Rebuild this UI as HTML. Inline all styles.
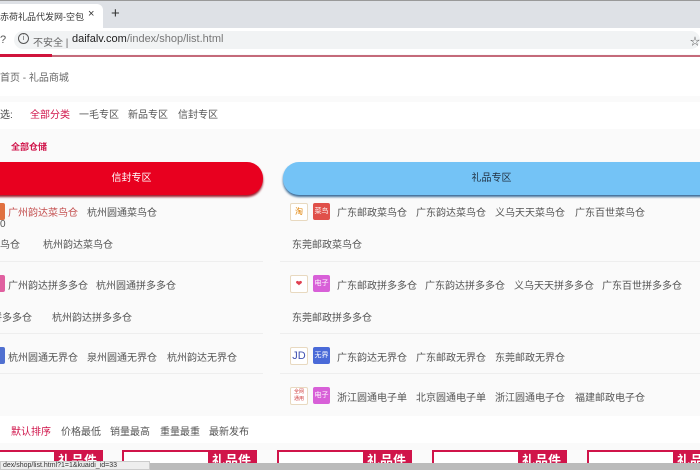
<!DOCTYPE html>
<html><head><meta charset="utf-8"><style>
*{margin:0;padding:0;box-sizing:border-box}
body{width:700px;height:470px;overflow:hidden;background:#fafafa;font-family:"Liberation Sans","Noto Sans CJK SC",sans-serif;font-size:10px;color:#555;position:relative}
.a{position:absolute;white-space:nowrap}
.ic{position:absolute;width:17px;height:17px;border-radius:2px;font-size:7px;color:#fff;text-align:center;line-height:17px}
.ib{position:absolute;width:18px;height:18px;border:1px solid #e8d9c0;background:#fff;border-radius:2px;font-size:8px;text-align:center;line-height:16px}
.card{position:absolute;top:450px;height:20px;border:2px solid #d0144a;border-bottom:none;background:#fff}
.card span{position:absolute;right:0;top:0;background:#d0144a;color:#fff;font-size:13px;font-weight:bold;padding:0 4px;height:18px;line-height:18px}
</style></head><body>
<div class="a" style="left:0;top:0;width:700px;height:28px;background:#dee1e6;border-top:1px solid #999"></div>
<div class="a" style="left:0;top:4px;width:103px;height:24px;background:#fff;border-radius:0 6px 0 0;overflow:hidden"></div>
<div class="a" style="left:0;top:10px;width:84px;overflow:hidden;font-size:9px;color:#333">赤荷礼品代发网-空包快递</div>
<div class="a" style="left:88px;top:8px;font-size:11px;color:#333">×</div>
<div class="a" style="left:111px;top:5px;font-size:15px;color:#333">+</div>
<div class="a" style="left:0;top:28px;width:700px;height:26px;background:#fff"></div>
<div class="a" style="left:14px;top:31px;width:686px;height:18px;background:#f1f3f4;border-radius:9px"></div>
<div class="a" style="left:0;top:34px;font-size:11px;color:#555">?</div>
<div class="a" style="left:18px;top:33px;width:11px;height:11px;border:1px solid #555;border-radius:50%;font-size:7px;text-align:center;line-height:9px;color:#555">i</div>
<div class="a" style="left:33px;top:34px;font-size:10px;color:#666">不安全 |</div>
<div class="a" style="left:72px;top:33px;font-size:11px;color:#222">daifalv.com<span style="color:#777">/index/shop/list.html</span></div>
<div class="a" style="left:690px;top:33px;font-size:10px;color:#555">☆</div>
<div class="a" style="left:0;top:55px;width:700px;height:2px;background:#c46a7a"></div>
<div class="a" style="left:0;top:54px;width:52px;height:3px;background:#d0143c"></div>
<div class="a" style="left:0;top:57px;width:700px;height:39px;background:#fff"></div>
<div class="a" style="left:0;top:69px;color:#666">首页 - 礼品商城</div>
<div class="a" style="left:0;top:102px;width:700px;height:27px;background:#fff"></div>
<div class="a" style="left:0;top:106px;color:#444">选:</div>
<div class="a" style="left:30px;top:106px;color:#d0144a">全部分类</div>
<div class="a" style="left:79px;top:106px">一毛专区</div>
<div class="a" style="left:128px;top:106px">新品专区</div>
<div class="a" style="left:178px;top:106px">信封专区</div>
<div class="a" style="left:11px;top:140px;color:#d0144a;font-size:9px;font-weight:bold">全部仓储</div>
<div class="a" style="left:-20px;top:162px;width:283px;height:33px;background:#e8001f;border-radius:16px;box-shadow:0 2px 2px #9a1a2a;color:#fff;text-align:center;line-height:33px;padding-left:20px">信封专区</div>
<div class="a" style="left:283px;top:162px;width:440px;height:33px;background:#74c3f6;border-radius:16px;box-shadow:0 2px 2px #3a6a96;color:#234;text-align:center;line-height:33px;padding-right:23px">礼品专区</div>
<div class="a" style="left:0;top:261px;width:263px;height:1px;background:#eee"></div>
<div class="a" style="left:0;top:333px;width:263px;height:1px;background:#eee"></div>
<div class="a" style="left:0;top:373px;width:263px;height:1px;background:#eee"></div>
<div class="a" style="left:280px;top:261px;width:420px;height:1px;background:#eee"></div>
<div class="a" style="left:280px;top:333px;width:420px;height:1px;background:#eee"></div>
<div class="a" style="left:280px;top:373px;width:420px;height:1px;background:#eee"></div>
<div class="ic" style="left:-12px;top:203px;background:#e07040"></div>
<div class="a" style="left:8px;top:204px;color:#c45050">广州韵达菜鸟仓</div>
<div class="a" style="left:87px;top:204px">杭州圆通菜鸟仓</div>
<div class="a" style="left:0;top:219px">0</div>
<div class="a" style="left:-10px;top:236px">菜鸟仓</div>
<div class="a" style="left:43px;top:236px">杭州韵达菜鸟仓</div>
<div class="ic" style="left:-12px;top:275px;background:#e060a0"></div>
<div class="a" style="left:8px;top:277px">广州韵达拼多多仓</div>
<div class="a" style="left:96px;top:277px">杭州圆通拼多多仓</div>
<div class="a" style="left:-8px;top:309px">拼多多仓</div>
<div class="a" style="left:52px;top:309px">杭州韵达拼多多仓</div>
<div class="ic" style="left:-12px;top:347px;background:#5070d0"></div>
<div class="a" style="left:8px;top:349px">杭州圆通无界仓</div>
<div class="a" style="left:87px;top:349px">泉州圆通无界仓</div>
<div class="a" style="left:167px;top:349px">杭州韵达无界仓</div>
<div class="ib" style="left:290px;top:203px;color:#e08000">淘</div>
<div class="ic" style="left:313px;top:203px;background:#e0504a">菜鸟</div>
<div class="a" style="left:337px;top:204px">广东邮政菜鸟仓</div>
<div class="a" style="left:416px;top:204px">广东韵达菜鸟仓</div>
<div class="a" style="left:495px;top:204px">义乌天天菜鸟仓</div>
<div class="a" style="left:575px;top:204px">广东百世菜鸟仓</div>
<div class="a" style="left:292px;top:236px">东莞邮政菜鸟仓</div>
<div class="ib" style="left:290px;top:275px;color:#e04050">❤</div>
<div class="ic" style="left:313px;top:275px;background:#d860d8">电子</div>
<div class="a" style="left:337px;top:277px">广东邮政拼多多仓</div>
<div class="a" style="left:425px;top:277px">广东韵达拼多多仓</div>
<div class="a" style="left:514px;top:277px">义乌天天拼多多仓</div>
<div class="a" style="left:602px;top:277px">广东百世拼多多仓</div>
<div class="a" style="left:292px;top:309px">东莞邮政拼多多仓</div>
<div class="ib" style="left:290px;top:347px;color:#4050b0;font-size:11px">JD</div>
<div class="ic" style="left:313px;top:347px;background:#4a6ad8">无界</div>
<div class="a" style="left:337px;top:349px">广东韵达无界仓</div>
<div class="a" style="left:416px;top:349px">广东邮政无界仓</div>
<div class="a" style="left:495px;top:349px">东莞邮政无界仓</div>
<div class="ib" style="left:290px;top:387px;color:#d04040;font-size:5px;line-height:7px;padding-top:1px">全网<br>通用</div>
<div class="ic" style="left:313px;top:387px;background:#d860d8">电子</div>
<div class="a" style="left:337px;top:389px">浙江圆通电子单</div>
<div class="a" style="left:416px;top:389px">北京圆通电子单</div>
<div class="a" style="left:495px;top:389px">浙江圆通电子仓</div>
<div class="a" style="left:575px;top:389px">福建邮政电子仓</div>
<div class="a" style="left:0;top:416px;width:700px;height:27px;background:#fff"></div>
<div class="a" style="left:11px;top:423px;color:#d0144a">默认排序</div>
<div class="a" style="left:61px;top:423px">价格最低</div>
<div class="a" style="left:110px;top:423px">销量最高</div>
<div class="a" style="left:160px;top:423px">重量最重</div>
<div class="a" style="left:209px;top:423px">最新发布</div>
<div class="card" style="left:-5px;width:108px"><span>礼品件</span></div>
<div class="card" style="left:122px;width:135px"><span>礼品件</span></div>
<div class="card" style="left:277px;width:135px"><span>礼品件</span></div>
<div class="card" style="left:432px;width:135px"><span>礼品件</span></div>
<div class="card" style="left:587px;width:135px"><span>礼品件</span></div>
<div class="a" style="left:0;top:463px;width:700px;height:7px;background:#bbb"></div>
<div class="a" style="left:0;top:461px;width:150px;height:9px;background:#eee;border:1px solid #ccc;font-size:7px;line-height:7px;color:#333;padding-left:2px">dex/shop/list.html?1=1&amp;kuaidi_id=33</div>
</body></html>
